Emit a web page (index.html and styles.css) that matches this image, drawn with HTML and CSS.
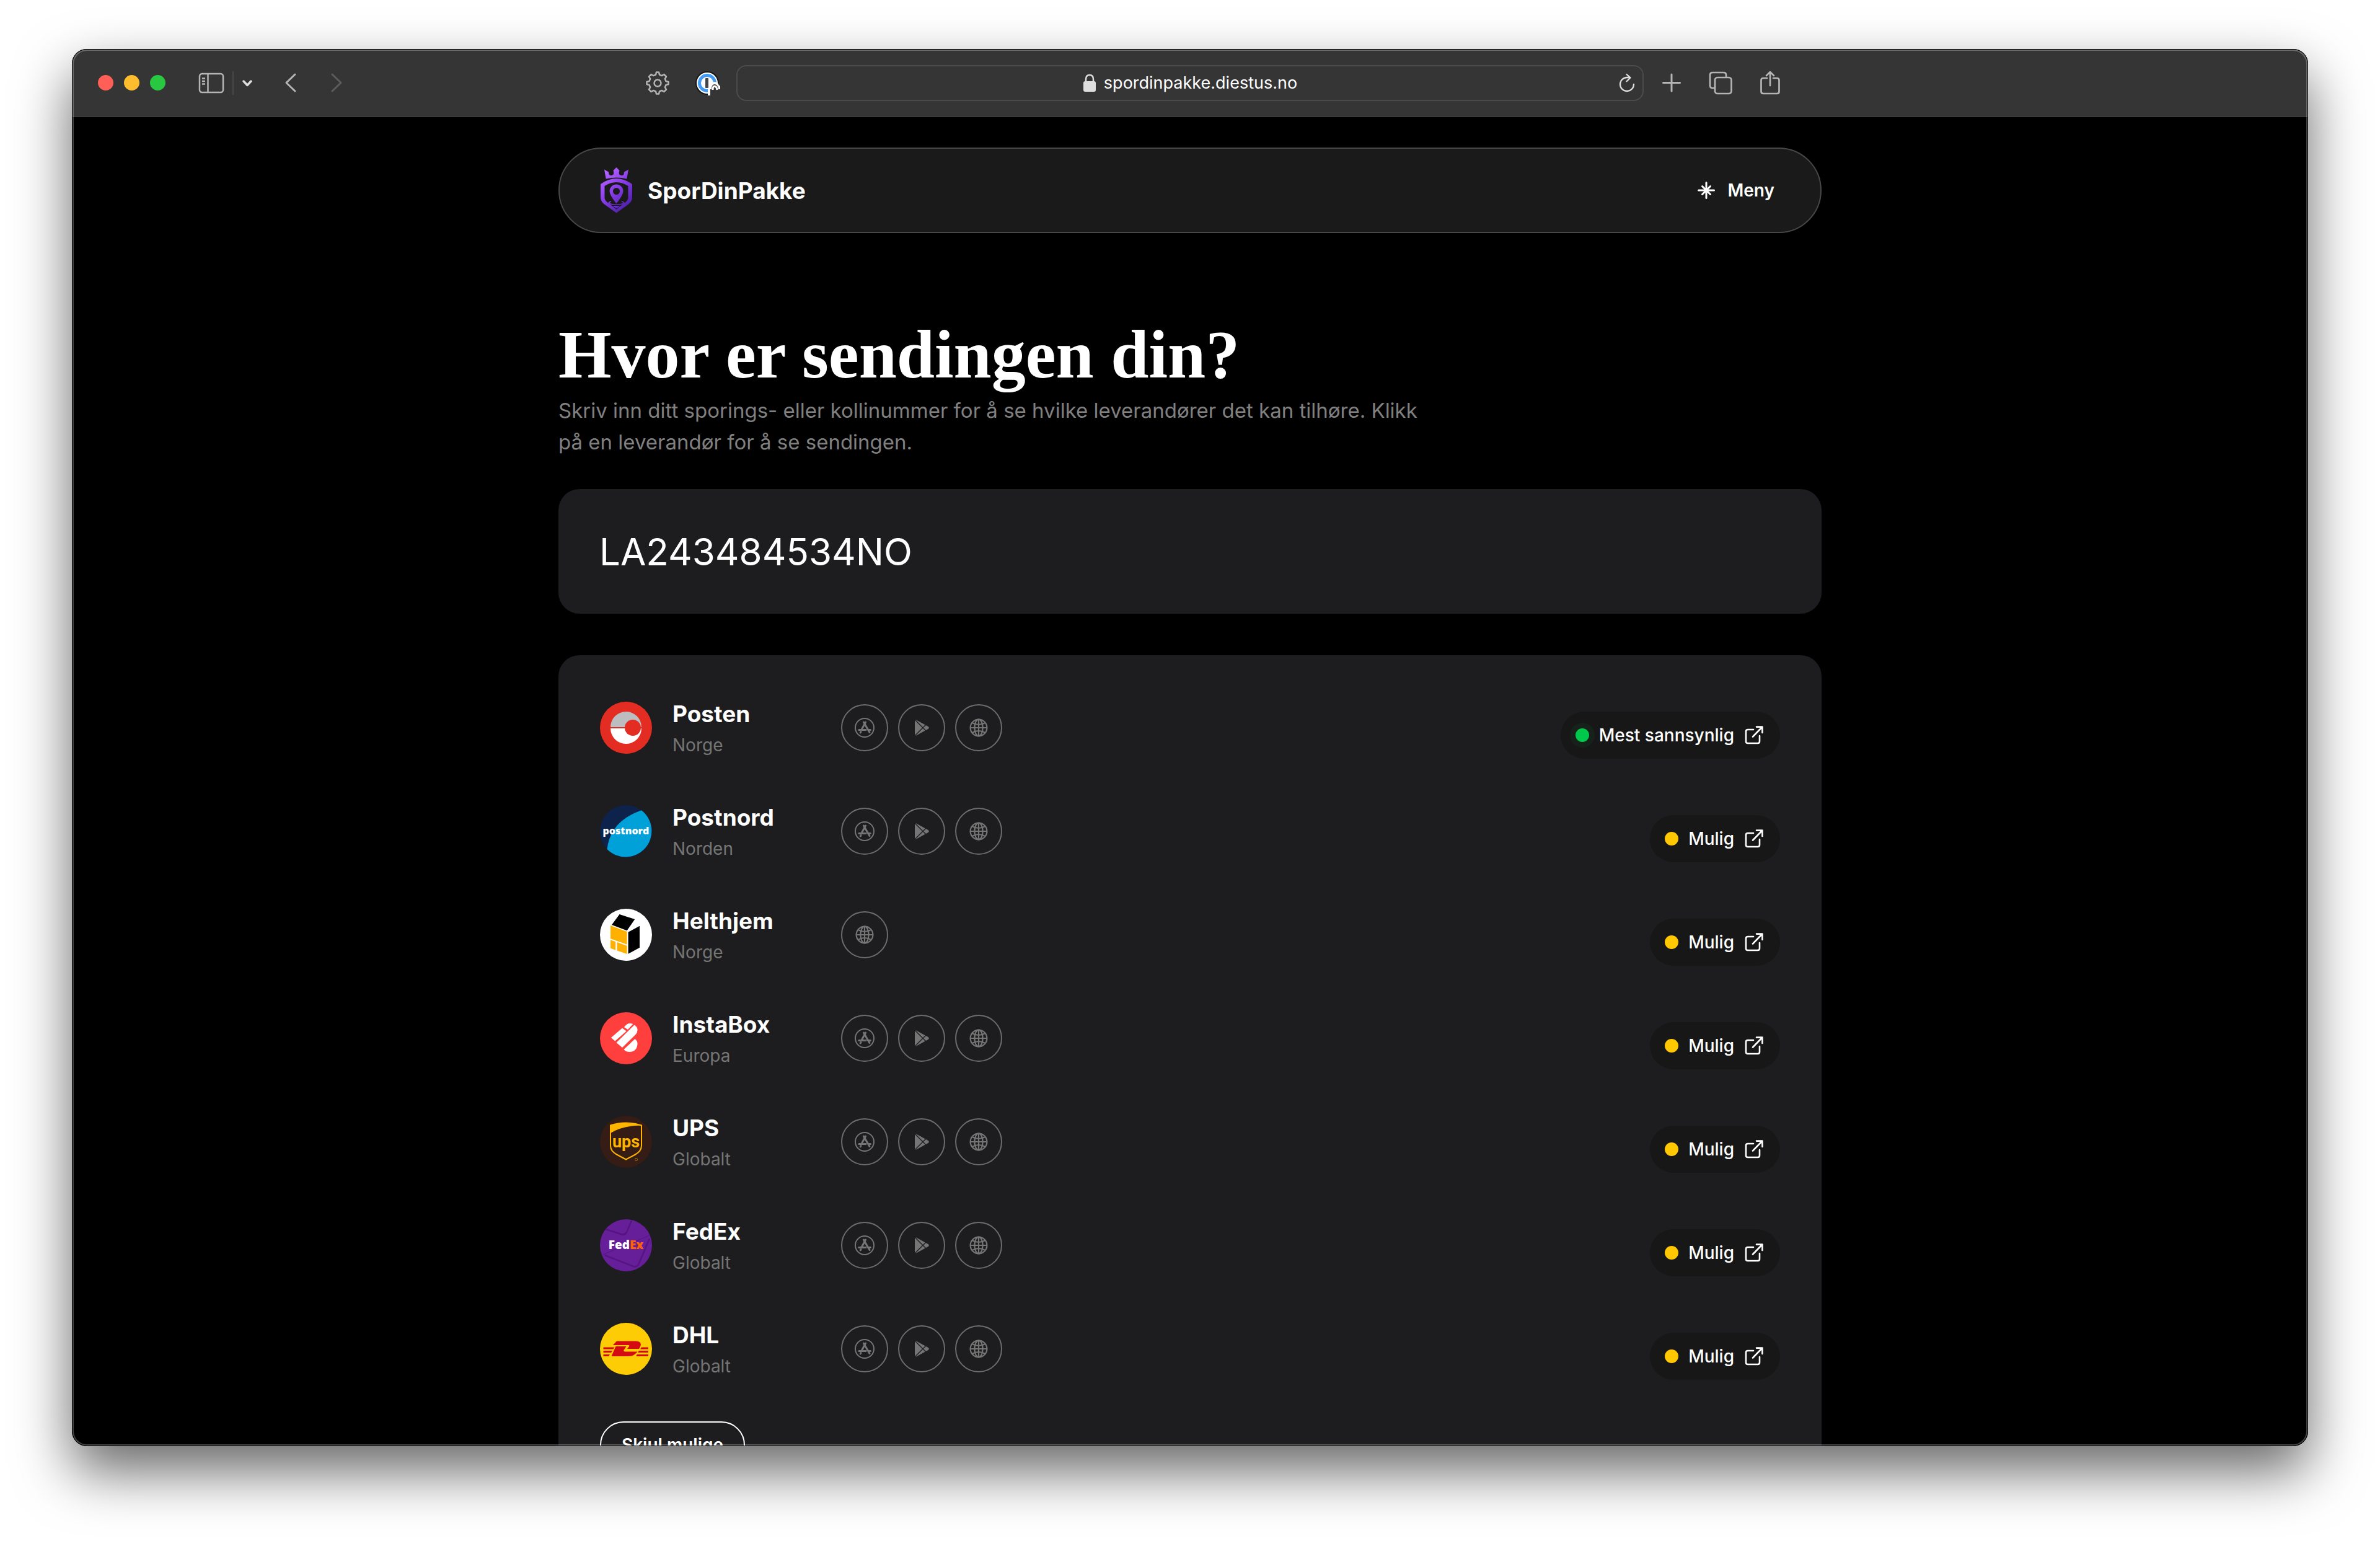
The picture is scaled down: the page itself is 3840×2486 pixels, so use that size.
FILE: index.html
```html
<!DOCTYPE html>
<html lang="no">
<head>
    <meta charset="UTF-8">
    <title>SporDinPakke</title>
    <link rel="stylesheet" href="styles.css">
</head>
<body>
    <!-- shared icons -->
    <svg class="sprite" aria-hidden="true">
        <symbol id="appstore" viewBox="0 0 32 32">
            <g fill="none" stroke="currentColor" stroke-linecap="round">
                <circle cx="16" cy="16" r="15" stroke-width="2"/>
                <path stroke-width="3" d="M17.6 7 11.6 18M14.4 7l9.6 16.4M6.8 19.4H18M22.6 19.4h2.8M10 22.6l-.8 1.2"/>
            </g>
        </symbol>
        <symbol id="play" viewBox="0 0 32 32">
            <path fill="currentColor" d="M5 4.500Q5 3.300 7.500 3.500L26.500 14q2.600 2 0 4L7.500 28.500Q5 28.700 5 27.500z"/>
            <path stroke="#1d1d1f" stroke-width="1.400" d="M5 3l19 19M5 29L24 10"/>
        </symbol>
        <symbol id="globe" viewBox="0 0 32 32">
            <g fill="none" stroke="currentColor" stroke-width="2.200">
                <circle cx="16" cy="16" r="13.400"/>
                <ellipse cx="16" cy="16" rx="6.600" ry="13.400"/>
                <path d="M16 2.600v26.800M2.600 16h26.800M5.500 8q10.500 6 21 0M5.500 24q10.500-6 21 0"/>
            </g>
        </symbol>
        <symbol id="external" viewBox="0 0 34 34">
            <path fill="none" stroke="currentColor" stroke-width="2.600" stroke-linecap="round" stroke-linejoin="round" d="M15 8H6q-3 0-3 3v16q0 3 3 3h16q3 0 3-3V18M20 3.600h9.400V13M29 4 14 19.500"/>
        </symbol>
    </svg>

    <div class="window">
        <header class="toolbar">
            <div class="toolbar-left">
                <div class="lights"><span class="red"></span><span class="yellow"></span><span class="green"></span></div>
                <button class="tool sidebar" aria-label="Sidepanel">
                    <svg width="42" height="34" viewBox="0 0 42 34" fill="none" stroke="#b5b5b5" stroke-width="2.500"><rect x="2" y="2" width="38" height="30" rx="4"/><path d="M15.500 2v30M6 9.500h5M6 14h5M6 18.500h5"/></svg>
                </button>
                <span class="divider"></span>
                <button class="tool" aria-label="Flere valg">
                    <svg width="18" height="34" viewBox="0 0 18 34" fill="none" stroke="#dedede" stroke-width="3.500" stroke-linecap="round" stroke-linejoin="round"><path d="M3 14l6 6.500 6-6.500"/></svg>
                </button>
                <div class="history">
                    <button class="tool" aria-label="Tilbake">
                        <svg width="20" height="34" viewBox="0 0 20 34" fill="none" stroke="#b5b5b5" stroke-width="3" stroke-linecap="round" stroke-linejoin="round"><path d="M17 3 3 16.500 17 30"/></svg>
                    </button>
                    <button class="tool" aria-label="Fremover">
                        <svg width="20" height="34" viewBox="0 0 20 34" fill="none" stroke="#5c5c5c" stroke-width="3" stroke-linecap="round" stroke-linejoin="round"><path d="M3 3l14 13.500L3 30"/></svg>
                    </button>
                </div>
                <div class="extensions">
                    <button class="tool" aria-label="Innstillinger">
                        <svg width="38" height="38" viewBox="0 0 38 38" fill="none" stroke="#b5b5b5" stroke-width="2.500" stroke-linejoin="round"><circle cx="19" cy="19" r="5.500"/><path d="M16 5.500 17 1.500h4l1 4 3.800 1.600L29.300 5l3.700 3.700-2.100 3.500 1.600 3.800 4 1v4l-4 1-1.600 3.800 2.100 3.500-3.700 3.700-3.500-2.100-3.800 1.600-1 4h-4l-1-4-3.800-1.600L8.700 33 5 29.300l2.100-3.500L5.500 22l-4-1v-4l4-1 1.600-3.800L5 8.700 8.700 5l3.500 2.100z"/></svg>
                    </button>
                    <button class="tool" aria-label="Passord">
                        <svg width="40" height="40" viewBox="0 0 40 40"><circle cx="19" cy="20" r="19" fill="#161616"/><circle cx="19" cy="20" r="17" fill="#fff"/><circle cx="19" cy="20" r="12.500" fill="#fff" stroke="#429bf5" stroke-width="5"/><rect x="16" y="12" width="5" height="16" rx="1" fill="#444"/><path fill="#fff" d="M20 40V29l3-3q1-8 8-8 6 0 7 6h2v16z"/><path fill="#353535" d="M24 40V30h2q0-8 5-8t6 8h3v10z"/><path fill="none" stroke="#fff" stroke-width="3" d="M28 31q0-6 3-6t4 6"/></svg>
                    </button>
                </div>
            </div>
            <div class="address">
                <svg class="lock" width="22" height="30" viewBox="0 0 22 30"><rect x="1" y="12" width="20" height="17" rx="3" fill="#dedede"/><path d="M5 13V9q0-7 6-7t6 7v4" fill="none" stroke="#dedede" stroke-width="2.500"/></svg>
                <span>spordinpakke.diestus.no</span>
                <button class="tool reload" aria-label="Last inn på nytt">
                    <svg width="26" height="32" viewBox="0 0 26 32" fill="none" stroke="#dedede" stroke-width="2.300" stroke-linecap="round" stroke-linejoin="round"><path d="M24 18A11 11 0 1 1 13 7h5M12.500 2 18.500 7.300l-6 6"/></svg>
                </button>
            </div>
            <div class="toolbar-right">
                <button class="tool" aria-label="Ny fane">
                    <svg width="30" height="40" viewBox="0 0 30 40" stroke="#b5b5b5" stroke-width="3" stroke-linecap="round"><path d="M15 6v27M1.500 19.500h27"/></svg>
                </button>
                <button class="tool" aria-label="Faner">
                    <svg width="38" height="40" viewBox="0 0 38 40" fill="none" stroke="#b5b5b5" stroke-width="2.700"><rect x="10" y="11" width="26.500" height="26" rx="4"/><path d="M28 11V7q0-4-4-4H6Q2 3 2 7v17q0 4 4 4h4"/></svg>
                </button>
                <button class="tool" aria-label="Del">
                    <svg width="32" height="40" viewBox="0 0 32 40" fill="none" stroke="#b5b5b5" stroke-width="2.700" stroke-linecap="round" stroke-linejoin="round"><path d="M11 12H5q-3.500 0-3.500 3.500v18Q1.500 37 5 37h22q3.500 0 3.500-3.500v-18Q30.500 12 27 12h-6M16 24V2M10 8l6-6 6 6"/></svg>
                </button>
            </div>
        </header>

        <main class="page">
            <nav class="nav">
                <a class="brand" href="#">
                    <svg width="52" height="74" viewBox="0 0 52 74">
                        <defs><linearGradient id="purple" gradientUnits="userSpaceOnUse" x1="4" y1="10" x2="50" y2="60"><stop offset="0" stop-color="#b464ff"/><stop offset=".5" stop-color="#863be6"/><stop offset="1" stop-color="#4c1fa8"/></linearGradient></defs>
                        <g fill="url(#purple)">
                            <path d="M6 3.500l7 4q0 6 4.500 5.500Q23 12 20.500 5L25.500 0l5 5q-2.500 7 3 8Q38 13.500 38 7.500l7-4L42.300 18.500q-16.800-4-33.600 0z"/>
                            <path fill-rule="evenodd" d="M0 27q25.500-18 51 0v21q0 7-6 11.500L25.500 73.500 6 59.500Q0 55 0 48zM6.500 30v19q0 4 5 8l4 0-2 1 12 10 12-10-2-1 4 0q5-4 5-8V30q-19-12-38 0z"/>
                            <path fill-rule="evenodd" d="M25.500 27.500a11 11 0 0 1 11 11q0 6-11 20-11-14-11-20a11 11 0 0 1 11-11zm0 5.500a5.500 5.500 0 1 0 0 11 5.500 5.500 0 0 0 0-11z"/>
                            <path d="M19 62h13l-6.500 4.500z"/>
                        </g>
                        <path d="M17 55q-7 2 0 4.300 8.500 2 17 0 7-2.300 0-4.300" fill="none" stroke="url(#purple)" stroke-width="1.600"/>
                    </svg>
                    SporDinPakke
                </a>
                <button class="menu">
                    <svg width="28" height="28" viewBox="0 0 28 28" stroke="#fff" stroke-width="3" stroke-linecap="round"><path d="M14 1.500v25M1.500 14h25M7.500 7.500l13 13M20.500 7.500l-13 13"/></svg>
                    Meny
                </button>
            </nav>

            <h1>Hvor er sendingen din?</h1>
            <label class="intro" for="number">Skriv inn ditt sporings- eller kollinummer for å se hvilke leverandører det kan tilhøre. Klikk på en leverandør for å se sendingen.</label>

            <input class="number" id="number" type="text" value="LA243484534NO">

            <section class="carriers">
                <article class="carrier">
                    <svg class="logo" viewBox="0 0 84 84"><circle cx="42" cy="42" r="42" fill="#e32d22"/><path d="M17 41a25 25 0 0 1 50 0z" fill="#bcbdc0"/><path d="M17 43a25 25 0 0 0 50 0z" fill="#fff"/><circle cx="53" cy="42" r="13" fill="#e32d22"/></svg>
                    <div class="name"><h2>Posten</h2><p>Norge</p></div>
                    <div class="links">
                        <a href="#" aria-label="App Store"><svg><use href="#appstore"/></svg></a>
                        <a href="#" aria-label="Google Play"><svg><use href="#play"/></svg></a>
                        <a href="#" aria-label="Nettside"><svg><use href="#globe"/></svg></a>
                    </div>
                    <a class="status likely" href="#"><span class="dot"></span>Mest sannsynlig<svg><use href="#external"/></svg></a>
                </article>

                <article class="carrier">
                    <svg class="logo" viewBox="0 0 84 84"><circle cx="42" cy="42" r="42" fill="#0d234b"/><path d="M67 8.200A42 42 0 1 1 11.500 71Q17 25 67 8.200z" fill="#00a0d8"/><text x="42" y="47" text-anchor="middle" font-size="16" fill="#fff">postnord</text></svg>
                    <div class="name"><h2>Postnord</h2><p>Norden</p></div>
                    <div class="links">
                        <a href="#" aria-label="App Store"><svg><use href="#appstore"/></svg></a>
                        <a href="#" aria-label="Google Play"><svg><use href="#play"/></svg></a>
                        <a href="#" aria-label="Nettside"><svg><use href="#globe"/></svg></a>
                    </div>
                    <a class="status" href="#"><span class="dot"></span>Mulig<svg><use href="#external"/></svg></a>
                </article>

                <article class="carrier">
                    <svg class="logo" viewBox="0 0 84 84"><circle cx="42" cy="42" r="42" fill="#fff"/><path d="M31.500 9l24.700 8-12.600 18.300L19 26zM45.600 37.700l18.400-10v35L45.600 72.700z"/><path fill="#ffb000" d="M17 27l26.600 10v20.700L17 48.300zM17 50.300l8.200 3v13.400l-8.200-3zM27.600 54l16 5.700V73l-16-5.500z"/></svg>
                    <div class="name"><h2>Helthjem</h2><p>Norge</p></div>
                    <div class="links">
                        <a href="#" aria-label="Nettside"><svg><use href="#globe"/></svg></a>
                    </div>
                    <a class="status" href="#"><span class="dot"></span>Mulig<svg><use href="#external"/></svg></a>
                </article>

                <article class="carrier">
                    <svg class="logo" viewBox="0 0 84 84"><circle cx="42" cy="42" r="42" fill="#ff3e3e"/><path fill="#fff" d="M38.800 24q5-6 8-6 4-.500 6.500 1L45 28zM18 41l18-15.500 6.700 5L24.300 46.500zM26.500 49l29-28.500Q61 24 60.500 29q0 4-3 7L36 57zM38.500 60l18-17q4 3 4 8-1 13-13 13-6 0-9-4z"/></svg>
                    <div class="name"><h2>InstaBox</h2><p>Europa</p></div>
                    <div class="links">
                        <a href="#" aria-label="App Store"><svg><use href="#appstore"/></svg></a>
                        <a href="#" aria-label="Google Play"><svg><use href="#play"/></svg></a>
                        <a href="#" aria-label="Nettside"><svg><use href="#globe"/></svg></a>
                    </div>
                    <a class="status" href="#"><span class="dot"></span>Mulig<svg><use href="#external"/></svg></a>
                </article>

                <article class="carrier">
                    <svg class="logo" viewBox="0 0 84 84"><circle cx="42" cy="42" r="42" fill="#351c15"/><path d="M17 15.500q25-8 50 0V48q0 9-10 14.500L42 70.500 27 62.500Q17 57 17 48z" fill="none" stroke="#ffb500" stroke-width="2"/><path fill="#ffb500" d="M17 15.500q25-8 50 0Q36 16 17 28z"/><text class="ups" x="42" y="51" text-anchor="middle" font-size="27" fill="#ffb500">ups</text><circle cx="58.500" cy="70.500" r="2" fill="none" stroke="#a87a10"/></svg>
                    <div class="name"><h2>UPS</h2><p>Globalt</p></div>
                    <div class="links">
                        <a href="#" aria-label="App Store"><svg><use href="#appstore"/></svg></a>
                        <a href="#" aria-label="Google Play"><svg><use href="#play"/></svg></a>
                        <a href="#" aria-label="Nettside"><svg><use href="#globe"/></svg></a>
                    </div>
                    <a class="status" href="#"><span class="dot"></span>Mulig<svg><use href="#external"/></svg></a>
                </article>

                <article class="carrier">
                    <svg class="logo" viewBox="0 0 84 84"><circle cx="42" cy="42" r="42" fill="#661f99"/><g fill="none" stroke="#541580" stroke-width="2.500"><path d="M9 16l25 8q6 2 9-3l8-19M8 58l46 18q6 2 9-5l17-40"/><path d="M5 57l75-31" stroke-width="1"/></g><text x="42" y="48" text-anchor="middle" font-size="19" fill="#fff">Fed<tspan fill="#ff6200">Ex</tspan></text></svg>
                    <div class="name"><h2>FedEx</h2><p>Globalt</p></div>
                    <div class="links">
                        <a href="#" aria-label="App Store"><svg><use href="#appstore"/></svg></a>
                        <a href="#" aria-label="Google Play"><svg><use href="#play"/></svg></a>
                        <a href="#" aria-label="Nettside"><svg><use href="#globe"/></svg></a>
                    </div>
                    <a class="status" href="#"><span class="dot"></span>Mulig<svg><use href="#external"/></svg></a>
                </article>

                <article class="carrier">
                    <svg class="logo" viewBox="0 0 84 84"><circle cx="42" cy="42" r="42" fill="#fecc05"/><path fill="#d50b14" d="M27 29.500h31q8 0 8 6-1 4-3 6.500H44l3-4q1-2-1-2H21zM25.500 38h17l-4 6q-1 2.500 2 2.500h20Q55 54 46 54H18.500zM5.500 39.500h18l-2 3h-16zM5.500 45h14.500l-2 3H5.500zM5.500 51h10.500l-2 3H5.500zM67 39.500h11v3H65zM63 45h15v3H61zM60 51h18v3H58z"/></svg>
                    <div class="name"><h2>DHL</h2><p>Globalt</p></div>
                    <div class="links">
                        <a href="#" aria-label="App Store"><svg><use href="#appstore"/></svg></a>
                        <a href="#" aria-label="Google Play"><svg><use href="#play"/></svg></a>
                        <a href="#" aria-label="Nettside"><svg><use href="#globe"/></svg></a>
                    </div>
                    <a class="status" href="#"><span class="dot"></span>Mulig<svg><use href="#external"/></svg></a>
                </article>

                <button class="hide">Skjul mulige</button>
            </section>
        </main>
    </div>
</body>
</html>
```

FILE: styles.css
```css
* { box-sizing: border-box; margin: 0; }
body { height: 100vh; padding: 79px 116px 153px; background: #fff; color: #fff; font-family: Inter, "Liberation Sans", sans-serif; font-size: 30px; overflow: hidden; }
button { padding: 0; border: none; background: none; color: inherit; font: inherit; cursor: pointer; }
a { color: inherit; text-decoration: none; }
svg { display: block; flex: none; }
.sprite { display: none; }

/* browser window */
.window { position: relative; height: 100%; display: flex; flex-direction: column; border-radius: 24px; background: #000; overflow: hidden; box-shadow: 0 40px 90px rgba(0,0,0,0.6); }
.window::after { content: ""; position: absolute; inset: 0; border: 1px solid #000; border-radius: 24px; box-shadow: inset 0 0 0 2px rgba(255,255,255,0.27); pointer-events: none; }
.toolbar { flex: none; display: grid; grid-template-columns: 1fr minmax(0, 1464px) 1fr; align-items: center; height: 110px; background: #353535; border-bottom: 1px solid #424242; }
.toolbar-left, .toolbar-right, .lights, .history, .extensions { display: flex; align-items: center; }
.toolbar-left { padding-left: 42px; padding-right: 26px; }
.lights { gap: 17px; }
.lights span { width: 25px; height: 25px; border-radius: 50%; }
.lights .red { background: #ff5f57; }
.lights .yellow { background: #febc2e; }
.lights .green { background: #28c840; }
.sidebar { margin-left: 53px; }
.divider { width: 2px; height: 38px; margin: 0 13px; background: #484848; }
.history { gap: 54px; margin-left: 51px; }
.extensions { gap: 42px; margin-left: auto; }
.address { position: relative; display: flex; align-items: center; justify-content: center; gap: 12px; height: 58px; border: 2px solid #4b4b4b; border-radius: 16px; font-size: 27px; }
.reload { position: absolute; right: 12px; }
.toolbar-right { gap: 45px; padding-left: 30px; }

/* page */
.page { width: 100%; max-width: 2038px; margin: 0 auto; padding-top: 49px; display: flex; flex-direction: column; }
.nav { display: flex; align-items: center; justify-content: space-between; height: 138px; padding: 0 74px 0 66px; border: 2px solid #484848; border-radius: 69px; background: #1a1a1a; }
.brand { display: flex; align-items: center; gap: 24px; font-size: 37px; font-weight: 700; }
.menu { display: flex; align-items: center; gap: 20px; font-size: 28px; font-weight: 600; }
h1 { margin-top: 136px; font-family: "Liberation Serif", serif; font-size: 110px; line-height: 120px; font-weight: 700; }
.intro { max-width: 1400px; margin-top: 5px; color: #808080; font-size: 33px; line-height: 51px; }
.number { width: 100%; height: 201px; margin-top: 50px; padding: 0 66px; border: none; border-radius: 34px; background: #1d1d1f; color: #fff; font-family: inherit; font-size: 60px; outline: none; }

.carriers { display: flex; flex-direction: column; align-items: flex-start; gap: 67px; margin-top: 67px; padding: 67px; border-radius: 34px; background: #1d1d1f; }
.carrier { display: flex; align-items: center; width: 100%; height: 100px; }
.logo { width: 84px; height: 84px; font-family: "Open Sans", sans-serif; font-weight: 800; }
.logo .ups { font-family: Roboto, sans-serif; font-weight: 700; }
.name { width: 272px; margin-top: 6px; margin-left: 33px; }
.name h2 { font-size: 37px; line-height: 50px; font-weight: 700; }
.name p { color: #757575; font-size: 28px; line-height: 50px; }
.links { display: flex; gap: 16px; }
.links a { display: flex; align-items: center; justify-content: center; width: 76px; height: 76px; border: 2px solid #6c6c6c; border-radius: 50%; color: #757575; }
.links svg { width: 32px; height: 32px; }
.status { display: flex; align-items: center; gap: 16px; height: 76px; margin-top: 24px; margin-left: auto; padding: 0 24px; border-radius: 38px; background: #171717; font-size: 28px; font-weight: 500; }
.status svg { width: 34px; height: 34px; }
.dot { width: 22px; height: 22px; border-radius: 50%; background: #ffc800; }
.likely .dot { background: #00c84b; box-shadow: 0 0 0 9px rgba(0,200,75,0.06); }
.hide { width: 234px; height: 76px; border: 2px solid #fff; border-radius: 38px; font-size: 28px; font-weight: 600; }
```
